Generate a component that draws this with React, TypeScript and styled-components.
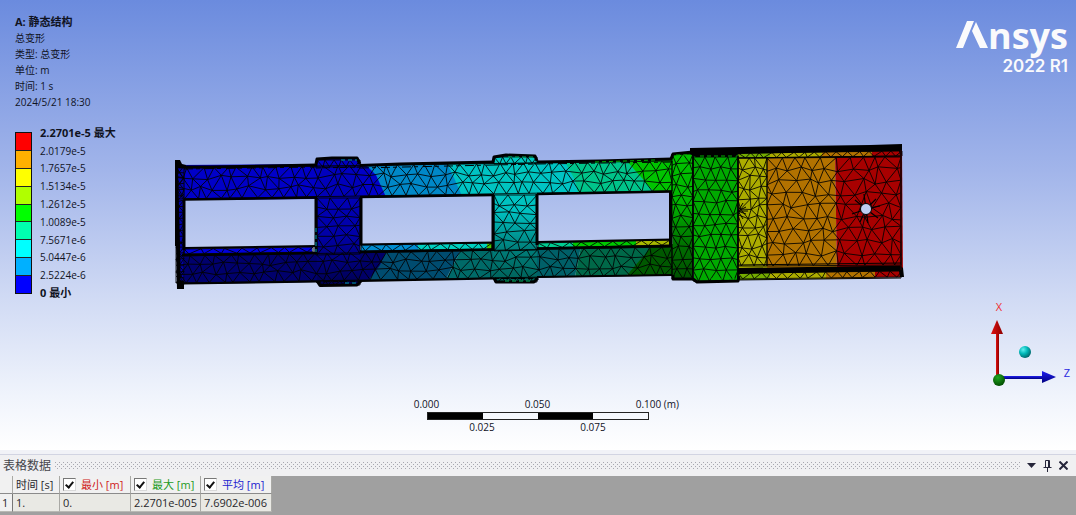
import React from "react";
import styled, { createGlobalStyle } from "styled-components";

const GlobalStyle = createGlobalStyle`
  *, *::before, *::after { box-sizing: border-box; }
  body {
    margin: 0;
    color: #10131f;
    font-family: "Open Sans", "Noto Sans CJK SC", sans-serif;
    font-size: 11px;
  }
`;

const Page = styled.div`
  display: flex;
  flex-direction: column;
  min-height: 100vh;
`;

const Scene = styled.main`
  flex: 1;
  display: flex;
  flex-direction: column;
  padding: 14px 0 16px 15px;
  background: linear-gradient(#6b8bde 0%, #a2b5ea 38%, #d0daf4 66%, #f0f4fc 88%, #ffffff 100%);
`;

const SceneHeader = styled.header`
  display: flex;
  justify-content: space-between;
  padding-right: 8px;
  height: 110px;
`;

const InfoLine = styled.p<{ $strong?: boolean }>`
  margin: 0;
  line-height: 16px;
  font-size: ${(p) => (p.$strong ? 11 : 10)}px;
  font-weight: ${(p) => (p.$strong ? 700 : 400)};
`;

const Brand = styled.div`
  color: #fafafc;
  text-align: right;
`;

const Wordmark = styled.div`
  display: flex;
  align-items: flex-start;
  height: 44px;
  font: 700 36px/44px "Open Sans", sans-serif;
`;

const BrandMark = styled.svg`
  width: 32px;
  height: 28px;
  margin-top: 7px;
`;

const Release = styled.div`
  font: 600 17px/16px Inter, sans-serif;
`;

const Stage = styled.section`
  flex: 1;
  display: grid;
  grid-template-columns: 155px minmax(0, 1fr) 166px;
`;

const Legend = styled.div`
  display: flex;
  align-items: center;
  align-self: start;
  gap: 8px;
`;

const Swatches = styled.div`
  display: flex;
  flex-direction: column;
  width: 17px;
  height: 162px;
  border: 1px solid #111;
`;

const Swatch = styled.span<{ $color: string }>`
  flex: 1;
  background: ${(p) => p.$color};
  & + & { border-top: 1px solid #222; }
`;

const LegendLabels = styled.ul`
  display: flex;
  flex-direction: column;
  height: 178px;
  margin: 0;
  padding: 0;
  list-style: none;
`;

const LegendLabel = styled.li<{ $strong: boolean }>`
  flex: 1;
  display: flex;
  align-items: center;
  font-size: ${(p) => (p.$strong ? 11 : 10)}px;
  font-weight: ${(p) => (p.$strong ? 700 : 400)};
  line-height: 14px;
  white-space: nowrap;
`;

const Model = styled.svg`
  display: block;
  width: 100%;
  margin-top: 16px;
`;

const Triad = styled.svg`
  align-self: end;
  justify-self: end;
  width: 100px;
  height: 90px;
  margin-bottom: 9px;
`;

const Scale = styled.div`
  align-self: center;
  display: flex;
  flex-direction: column;
  align-items: center;
  gap: 1px;
  margin-right: 16px;
  line-height: 13px;
  font-size: 10px;
`;

const TickRow = styled.div<{ $count: number }>`
  display: grid;
  grid-template-columns: repeat(${(p) => p.$count}, 111px);
  text-align: center;
`;

const Unit = styled.span`
  display: inline-block;
  width: 0;
  white-space: pre;
`;

const ScaleBar = styled.div`
  display: flex;
  width: 222px;
  height: 8px;
  border: 1px solid #222;
`;

const ScaleSegment = styled.span<{ $filled: boolean }>`
  flex: 1;
  background: ${(p) => (p.$filled ? "#000" : "transparent")};
`;

const Panel = styled.section`
  display: flex;
  flex-direction: column;
  min-height: 65px;
  border-top: 4px solid #f1f2f7;
  background: #a0a0a0;
`;

const PanelHeader = styled.header`
  display: flex;
  align-items: center;
  gap: 4px;
  height: 22px;
  padding: 0 7px 0 3px;
  border-top: 1px solid #d2d4e2;
  background: #f0f0f2;
`;

const PanelTitle = styled.h2`
  margin: 0;
  color: #45454b;
  font-size: 12px;
  font-weight: 400;
  line-height: 16px;
`;

const Grip = styled.div`
  flex: 1;
  height: 8px;
  background-image:
    conic-gradient(from 270deg at 1px 1px, #a8a8b0 90deg, transparent 0),
    conic-gradient(from 270deg at 1px 1px, #a8a8b0 90deg, transparent 0);
  background-size: 4px 4px;
  background-position: 0 0, 2px 2px;
`;

const IconButton = styled.button`
  display: grid;
  place-items: center;
  width: 12px;
  height: 16px;
  padding: 0;
  border: 0;
  background: none;
  color: #25253a;
`;

const DataTable = styled.table`
  align-self: flex-start;
  border-collapse: separate;
  border-spacing: 0;
  table-layout: fixed;
  width: 272px;
  line-height: 16px;
  font-size: 11px;
  color: #27272b;
`;

const Cell = styled.td`
  height: 18px;
  padding: 0 3px;
  border-right: 1px solid #a9a9a5;
  border-bottom: 1px solid #b9b9b4;
  background: #e9e9e4;
  text-align: left;
  font-weight: 400;
  white-space: nowrap;
`;

const HeadCell = styled(Cell)<{ $color?: string }>`
  background: #f1f1f1;
  border-bottom-color: #8b8b8b;
  color: ${(p) => p.$color || "#27272b"};
`;

const RowHead = styled(Cell)`
  padding: 0 2px;
  background: #f1f1f1;
  border-right-color: #777;
`;

const ColumnToggle = styled.label`
  display: flex;
  align-items: center;
  gap: 5px;
`;

const Check = styled.input`
  appearance: none;
  width: 13px;
  height: 13px;
  margin: 0;
  border: 1px solid #d8d8d8;
  border-top-color: #777;
  border-left-color: #777;
  background: #fff;
  display: grid;
  place-items: center;
  &:checked::before {
    content: "";
    width: 5px;
    height: 8px;
    margin-bottom: 2px;
    border: solid #111;
    border-width: 0 2px 2px 0;
    transform: rotate(40deg);
  }
`;

const legendColors = ["#ff0000", "#ffb000", "#ffff00", "#b0ff00", "#00ff00", "#00ffb0", "#00ffff", "#00b0ff", "#0000ff"];

const legendLabels = [
  "2.2701e-5 最大",
  "2.0179e-5",
  "1.7657e-5",
  "1.5134e-5",
  "1.2612e-5",
  "1.0089e-5",
  "7.5671e-6",
  "5.0447e-6",
  "2.5224e-6",
  "0 最小",
];

const resultColumns = [
  { name: "最小", color: "#cf2222", value: "0." },
  { name: "最大", color: "#1d9a1d", value: "2.2701e-005" },
  { name: "平均", color: "#2222cf", value: "7.6902e-006" },
];

type Patch = {
  x0: number; x1: number;
  // upper edge at left and right, then lower edge at left and right
  t0: number; t1: number; b0: number; b1: number;
  cols: number; rows: number; jitter?: number;
};

/* Triangulates a quadrilateral patch with a staggered, slightly irregular lattice. */
function meshPath(p: Patch, seed: number): string {
  let s = seed * 7919 + 17;
  const rnd = () => {
    s = (s * 16807) % 2147483647;
    return s / 2147483647 - 0.5;
  };
  const j = p.jitter ?? 0.4;
  const grid: number[][][] = [];
  for (let r = 0; r <= p.rows; r++) {
    const us: number[] = [];
    if (r % 2 === 0) for (let i = 0; i <= p.cols; i++) us.push(i / p.cols);
    else {
      us.push(0);
      for (let i = 0; i < p.cols; i++) us.push((i + 0.5) / p.cols);
      us.push(1);
    }
    grid.push(
      us.map((u) => {
        const uu = u > 0 && u < 1 ? u + (rnd() * j) / p.cols : u;
        const v = r / p.rows;
        const vv = r > 0 && r < p.rows ? v + (rnd() * j) / p.rows : v;
        const top = p.t0 + (p.t1 - p.t0) * uu;
        const bottom = p.b0 + (p.b1 - p.b0) * uu;
        return [p.x0 + (p.x1 - p.x0) * uu, top + (bottom - top) * vv];
      })
    );
  }
  const at = (q: number[]) => `${q[0].toFixed(1)} ${q[1].toFixed(1)}`;
  let d = "";
  grid.forEach((row, r) => {
    d += "M" + row.map(at).join("L");
    if (r === p.rows) return;
    const even = r % 2 === 0 ? row : grid[r + 1];
    const odd = r % 2 === 0 ? grid[r + 1] : row;
    even.forEach((e, i) => {
      d += `M${at(odd[i])}L${at(e)}L${at(odd[i + 1])}`;
    });
  });
  return d;
}

const patches: Patch[] = [
  // rails run unbroken beneath the cross blocks
  { x0: 177, x1: 672, t0: 168, t1: 161, b0: 199, b1: 191, cols: 40, rows: 3, jitter: 0.5 },
  { x0: 180, x1: 672, t0: 256, t1: 247, b0: 283, b1: 275, cols: 40, rows: 3, jitter: 0.5 },
  { x0: 176, x1: 184, t0: 166, t1: 166, b0: 283, b1: 283, cols: 1, rows: 20 },
  { x0: 317, x1: 360, t0: 198, t1: 198, b0: 255, b1: 254, cols: 3, rows: 6 },
  { x0: 317, x1: 360, t0: 160, t1: 160, b0: 167, b1: 167, cols: 5, rows: 1 },
  { x0: 319, x1: 360, t0: 281, t1: 281, b0: 285, b1: 285, cols: 6, rows: 1 },
  { x0: 494, x1: 537, t0: 195, t1: 195, b0: 251, b1: 250, cols: 3, rows: 6 },
  { x0: 494, x1: 537, t0: 157, t1: 157, b0: 164, b1: 163, cols: 5, rows: 1 },
  { x0: 495, x1: 537, t0: 278, t1: 278, b0: 282, b1: 282, cols: 6, rows: 1 },
  { x0: 672, x1: 693, t0: 154, t1: 154, b0: 279, b1: 279, cols: 2, rows: 12 },
  { x0: 693, x1: 738, t0: 157, t1: 157, b0: 281, b1: 281, cols: 4, rows: 11, jitter: 0.3 },
  { x0: 738, x1: 767, t0: 158, t1: 158, b0: 266, b1: 266, cols: 3, rows: 11, jitter: 0.6 },
  { x0: 767, x1: 901, t0: 158, t1: 157, b0: 266, b1: 265, cols: 10, rows: 9, jitter: 0.5 },
  { x0: 738, x1: 902, t0: 153, t1: 151, b0: 158, b1: 156, cols: 15, rows: 1 },
  { x0: 738, x1: 902, t0: 273, t1: 271, b0: 279, b1: 277, cols: 15, rows: 1 },
  { x0: 184, x1: 313, t0: 249, t1: 247, b0: 254, b1: 252, cols: 9, rows: 1 },
  { x0: 361, x1: 492, t0: 245, t1: 243, b0: 251, b1: 249, cols: 10, rows: 1 },
  { x0: 538, x1: 670, t0: 243, t1: 240, b0: 248, b1: 245, cols: 9, rows: 1 },
];

const faces: [string, string][] = [
  // upper rail
  ["#0000c8", "176,165 317,164 317,199 176,200"],
  ["#0088c8", "360,165 450,163 463,196 360,198"],
  ["#0000c8", "358,165 366,165 376,175 386,197 358,198"],
  ["#00c4c4", "447,163 494,161 494,196 462,196 455,180"],
  ["#00c4c4", "537,162 570,162 580,194 537,194"],
  ["#00c48a", "565,162 627,160 654,192 578,194 575,180"],
  ["#00c400", "626,160 693,157 693,192 654,192"],
  // lower rail
  ["#00006c", "179,254 317,252 317,282 179,284"],
  ["#004c70", "360,250 462,248 446,279 360,281"],
  ["#000068", "358,250 387,250 380,265 368,281 358,281"],
  ["#006a68", "462,248 494,248 494,278 446,279"],
  ["#006068", "537,247 581,246 575,277 537,277"],
  ["#006848", "581,246 654,244 645,260 627,275 575,277"],
  ["#005800", "654,244 693,244 693,276 627,275"],
  // inner ledges
  ["#0000dc", "184,249 312,247 312,252 184,254"],
  ["#008cd0", "361,245 418,244 418,250 361,251"],
  ["#00d0c0", "418,244 487,243 487,249 418,250"],
  ["#48c800", "487,243 493,243 493,249 487,249"],
  ["#00cc90", "538,243 573,242 573,247 538,248"],
  ["#00c800", "573,242 636,241 636,246 573,247"],
  ["#a8b800", "636,241 670,240 670,245 636,246"],
  // end flange
  ["#0000a8", "176,162 185,166 185,284 179,286"],
  // tip plate
  ["#acac00", "738,152 767,152 767,280 738,280"],
  ["#b27200", "767,152 835,151 837,279 767,279"],
  ["#a80000", "835,151 902,149 903,277 837,278"],
  ["#74ac00", "738,151 780,151 780,157 738,158"],
  ["#acac00", "770,151 822,150 822,157 770,157"],
  ["#b27200", "822,150 872,150 872,156 822,157"],
  ["#74ac00", "738,273 785,273 785,279 738,280"],
  ["#acac00", "770,273 826,272 826,279 770,279"],
  ["#b27200", "826,272 875,271 875,278 826,279"],
];

function ModelView() {
  const mesh = patches.map((p, i) => meshPath(p, i + 1)).join("");
  return (
    <Model viewBox="170 140 740 155" role="img" aria-label="总变形">
      <defs>
        <linearGradient id="navy" x1="0" y1="0" x2="0" y2="1">
          <stop offset="0" stopColor="#0000c4" />
          <stop offset="0.6" stopColor="#0000a8" />
          <stop offset="1" stopColor="#000050" />
        </linearGradient>
        <linearGradient id="cyan" x1="0" y1="0" x2="0" y2="1">
          <stop offset="0" stopColor="#00c8c0" />
          <stop offset="0.45" stopColor="#00c0c0" />
          <stop offset="0.75" stopColor="#007c78" />
          <stop offset="1" stopColor="#006058" />
        </linearGradient>
        <linearGradient id="leaf" x1="0" y1="0" x2="0" y2="1">
          <stop offset="0" stopColor="#00c400" />
          <stop offset="0.4" stopColor="#00b400" />
          <stop offset="0.75" stopColor="#006c00" />
          <stop offset="1" stopColor="#005000" />
        </linearGradient>
      </defs>

      {faces.map(([fill, points], i) => (
        <polygon key={i} fill={fill} points={points} />
      ))}
      <polygon fill="url(#navy)" points="316,160 332,157 358,158 360,164 360,282 357,286 320,286 317,282" />
      <polygon fill="url(#cyan)" points="493,158 505,154 535,155 537,160 537,280 533,283 496,282 493,278" />
      <polygon fill="url(#leaf)" points="671,155 693,151 693,280 673,279" />
      <polygon fill="#00aa00" points="693,153 738,152 738,282 694,282" />

      <path d={mesh} fill="none" stroke="#000" strokeWidth="1" strokeOpacity="0.85" />

      {/* feature edges of the frame */}
      <g fill="none" stroke="#000" strokeLinejoin="round">
        <path strokeWidth="3" d="M184 167H210L317 165M360 165.500L400 164 494 162M537 162L600 161 672 159" />
        <path strokeWidth="1" strokeDasharray="9 3 4 5" d="M184 169L317 167M360 168L494 165M537 164L672 162" />
        <path strokeWidth="1" strokeDasharray="5 2 7 3" d="M316 168L360 167M316 282L360 281M494 165L537 164M494 278.500L537 278.500" />
        <path strokeWidth="2.500" d="M184 199.500L317 197.500M360 197L494 195M537 194L672 191.500" />
        <path strokeWidth="2" d="M184 248L317 246M360 244.500L494 242.500M537 242L672 239.500" />
        <path strokeWidth="2.500" d="M182 255L317 253M360 252L494 249.500M537 248.500L672 246" />
        <path strokeWidth="2" d="M182 283.500L317 281.500M360 281L494 278.500M537 277L672 275" />
        <path strokeWidth="3" d="M184 200V250M316 198V253M361 197V245M493 195V250M537 194V245M670.500 191V246" />
        <path strokeWidth="3" d="M316 164L317 159 332 158 357 158 360 164M317 281L320 285.500 357 285 361 281" />
        <path strokeWidth="3" d="M493 162L494 157 506 155 535 156 537 161M494 278L496 282 534 282 538 278" />
        <path strokeWidth="3" d="M671 159L673 154 693 152M673 275V279H693L697 282 738 281 739 276" />
        <path strokeWidth="1.500" d="M693 153V280M738 156V280" />
      </g>
      <path d="M175 160H180L182 164 186 165V168H178L180 246V280L184 281V289H177L176 246H175Z" />
      <path d="M690 148L765 146.500 870 145 902 144V155H900L899 151 738 154 735 157H696L690 154Z" />
      <path d="M738 268L900 265.500 903 268 904 277H900L899 271 738 274Z" />
      <path d="M901 150V270" stroke="#200000" strokeWidth="1.500" />
      <path d="M738 158L901 156M738 265L901 263M738 280L901 278" fill="none" stroke="#000" strokeWidth="1" />
      <path d="M738 211L746 207M738 211L746 214M738 211L748 211M738 211L743 203M738 211L743 219" stroke="#000" />
      <path
        d="M866 209L855 200M866 209L876 199M866 209L880 206M866 209L878 218M866 209L868 223M866 209L860 222M866 209L852 214M866 209L864 194"
        stroke="#000"
        strokeWidth="1.200"
      />
      <circle cx="866" cy="209" r="5.500" fill="#bfcdf2" stroke="#000" strokeWidth="1" />

      {/* small glimpses of colour through the block edges */}
      <g fill="none" strokeWidth="1" strokeDasharray="4 3">
        <path stroke="#009cae" d="M341 160H357M316 228V252M345 283H359" />
        <path stroke="#00b060" d="M508 157H534M505 281H533" />
        <path stroke="#00b000" d="M595 162L655 160M676 155H690M700 156H735M704 279H735" />
      </g>
    </Model>
  );
}

function AxisTriad() {
  return (
    <Triad viewBox="976 298 100 90" role="img" aria-label="坐标轴">
      <defs>
        <linearGradient id="axisX">
          <stop offset="0" stopColor="#e01010" />
          <stop offset="1" stopColor="#8c0000" />
        </linearGradient>
        <linearGradient id="axisZ" x1="0" y1="0" x2="0" y2="1">
          <stop offset="0" stopColor="#2020f0" />
          <stop offset="1" stopColor="#000080" />
        </linearGradient>
        <radialGradient id="ballY" cx="0.4" cy="0.3" r="0.7">
          <stop offset="0" stopColor="#20a820" />
          <stop offset="1" stopColor="#004c00" />
        </radialGradient>
        <radialGradient id="ballIso" cx="0.35" cy="0.3" r="0.7">
          <stop offset="0" stopColor="#60f0f0" />
          <stop offset="0.5" stopColor="#00b8b8" />
          <stop offset="1" stopColor="#006c70" />
        </radialGradient>
      </defs>
      <rect x="996" y="330" width="3" height="46" fill="url(#axisX)" />
      <path d="M997 319L1003 333H991Z" fill="url(#axisX)" />
      <rect x="1000" y="375" width="44" height="3" fill="url(#axisZ)" />
      <path d="M1042 370L1056 376 1042 382Z" fill="url(#axisZ)" />
      <circle cx="999" cy="379" r="6" fill="url(#ballY)" />
      <circle cx="1025" cy="351" r="6" fill="url(#ballIso)" />
      <text x="999" y="310" fill="#f03030" fontSize="11" textAnchor="middle">X</text>
      <text x="1067" y="376" fill="#2828e0" fontSize="11" textAnchor="middle">Z</text>
    </Triad>
  );
}

export default function App() {
  return (
    <Page>
      <GlobalStyle />
      <Scene>
        <SceneHeader>
          <div>
            <InfoLine $strong>A: 静态结构</InfoLine>
            <InfoLine>总变形</InfoLine>
            <InfoLine>类型: 总变形</InfoLine>
            <InfoLine>单位: m</InfoLine>
            <InfoLine>时间: 1 s</InfoLine>
            <InfoLine>2024/5/21 18:30</InfoLine>
          </div>
          <Brand>
            <Wordmark aria-label="Ansys">
              <BrandMark viewBox="0 0 32 28" aria-hidden="true">
                <path fill="currentColor" d="M0 27L11 0H18L7 27ZM16 10L20 1 32 27H24Z" />
              </BrandMark>
              nsys
            </Wordmark>
            <Release>2022 R1</Release>
          </Brand>
        </SceneHeader>

        <Stage>
          <Legend>
            <Swatches>
              {legendColors.map((c) => (
                <Swatch key={c} $color={c} />
              ))}
            </Swatches>
            <LegendLabels>
              {legendLabels.map((label, i) => (
                <LegendLabel key={label} $strong={i === 0 || i === legendLabels.length - 1}>
                  {label}
                </LegendLabel>
              ))}
            </LegendLabels>
          </Legend>
          <ModelView />
          <AxisTriad />
        </Stage>

        <Scale>
          <TickRow $count={3}>
            <span>0.000</span>
            <span>0.050</span>
            <span>0.100<Unit> (m)</Unit></span>
          </TickRow>
          <ScaleBar>
            {[true, false, true, false].map((filled, i) => (
              <ScaleSegment key={i} $filled={filled} />
            ))}
          </ScaleBar>
          <TickRow $count={2}>
            <span>0.025</span>
            <span>0.075</span>
          </TickRow>
        </Scale>
      </Scene>

      <Panel>
        <PanelHeader>
          <PanelTitle>表格数据</PanelTitle>
          <Grip />
          <IconButton aria-label="菜单">
            <svg width="9" height="5" viewBox="0 0 9 5"><path d="M0 0H9L4.500 5Z" fill="currentColor" /></svg>
          </IconButton>
          <IconButton aria-label="固定">
            <svg width="9" height="12" viewBox="0 0 9 12" fill="none" stroke="currentColor">
              <path d="M2.500 7V0.500H6.500V7M0.500 7.500H8.500M4.500 8V12M5.500 1V7" />
            </svg>
          </IconButton>
          <IconButton aria-label="关闭">
            <svg width="9" height="9" viewBox="0 0 9 9" fill="none" stroke="currentColor" strokeWidth="2">
              <path d="M0.500 0.500L8.500 8.500M8.500 0.500L0.500 8.500" />
            </svg>
          </IconButton>
        </PanelHeader>
        <DataTable>
          <colgroup>
            <col width="13" />
            <col width="47" />
            <col width="71" />
            <col width="70" />
            <col width="71" />
          </colgroup>
          <thead>
            <tr>
              <HeadCell as="th" />
              <HeadCell as="th" scope="col">时间 [s]</HeadCell>
              {resultColumns.map((c) => (
                <HeadCell as="th" scope="col" key={c.name} $color={c.color}>
                  <ColumnToggle>
                    <Check type="checkbox" defaultChecked />
                    {c.name} [m]
                  </ColumnToggle>
                </HeadCell>
              ))}
            </tr>
          </thead>
          <tbody>
            <tr>
              <RowHead as="th" scope="row">1</RowHead>
              <Cell>1.</Cell>
              {resultColumns.map((c) => (
                <Cell key={c.name}>{c.value}</Cell>
              ))}
            </tr>
          </tbody>
        </DataTable>
      </Panel>
    </Page>
  );
}
